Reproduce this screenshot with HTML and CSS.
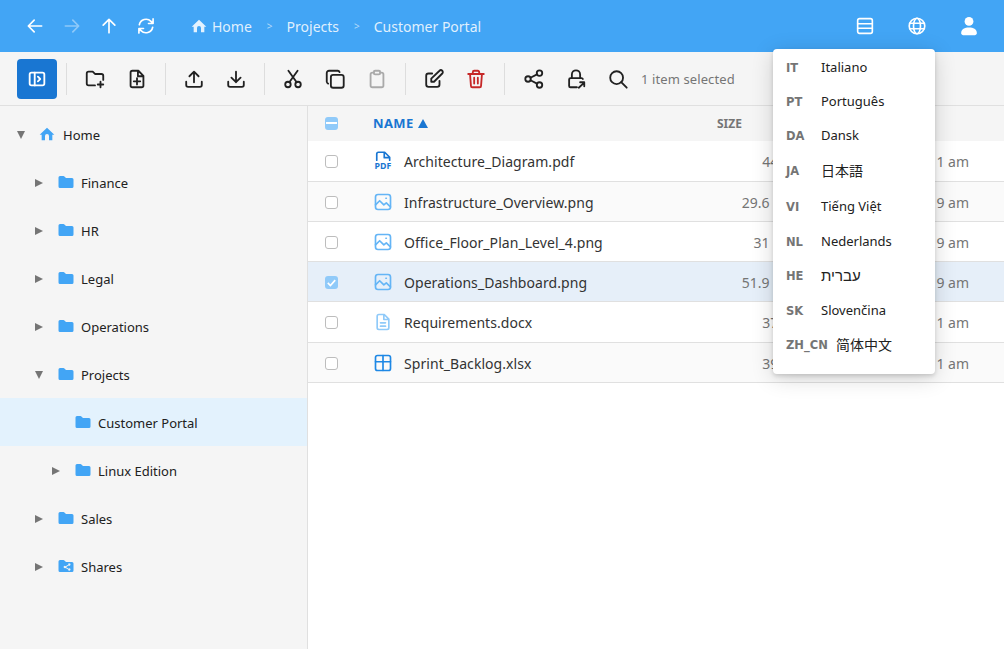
FILE: index.html
```html
<!DOCTYPE html>
<html lang="en">
<head>
    <meta charset="UTF-8">
    <meta name="viewport" content="width=device-width, initial-scale=1.0">
    <title>File Manager</title>
    <link rel="stylesheet" href="styles.css">
</head>
<body>

    <!-- Shared icons -->
    <svg class="sprite">
        <symbol id="folder" viewBox="0 0 24 24"><path d="M4 4h4.5a1.500 1.500 0 0 1 1 .4L12 6.500h8a2 2 0 0 1 2 2V18a2 2 0 0 1-2 2H4a2 2 0 0 1-2-2V6a2 2 0 0 1 2-2z"/></symbol>
        <symbol id="home" viewBox="0 0 24 24"><path d="M12 2.500 1 13h3v8.500h5V15a3 3 0 0 1 6 0v6.500h5V13h3z"/></symbol>
        <symbol id="image" viewBox="0 0 24 24"><rect x="3" y="3" width="18" height="18" rx="3"/><path d="m3 15.500 5-5 5 5 3-2.500 5 5M15.500 7.500h.5"/></symbol>
    </svg>

    <!-- Top bar -->
    <header class="topbar">
        <div class="nav-buttons">
            <svg class="icon" viewBox="0 0 24 24"><path d="M20 12H4.500M11 5l-7 7 7 7"/></svg>
            <svg class="icon faded" viewBox="0 0 24 24"><path d="M4 12h15.500M13 5l7 7-7 7"/></svg>
            <svg class="icon" viewBox="0 0 24 24"><path d="M12 20V4.500M5 11l7-7 7 7"/></svg>
            <svg class="icon" viewBox="0 0 24 24"><path d="M4 10.500a8.200 8.200 0 0 1 14-4l2 2.200M20.500 3.500v5.500H15M20 13.500a8.200 8.200 0 0 1-14 4l-2-2.200M3.500 20.500V15H9"/></svg>
        </div>
        <nav class="breadcrumbs">
            <svg class="crumb-home"><use href="#home"/></svg>
            <span class="crumb">Home</span>
            <span class="crumb-sep">&gt;</span>
            <span class="crumb">Projects</span>
            <span class="crumb-sep">&gt;</span>
            <span class="crumb">Customer Portal</span>
        </nav>
        <div class="top-actions">
            <svg class="icon" viewBox="0 0 24 24"><rect x="4" y="4" width="16" height="16" rx="2"/><path d="M4 9.500h16M4 14.500h16"/></svg>
            <svg class="icon" viewBox="0 0 24 24"><circle cx="12" cy="12" r="8.500"/><ellipse cx="12" cy="12" rx="3.800" ry="8.500"/><path d="M4 9h16M4 15h16"/></svg>
            <svg class="icon solid" viewBox="0 0 24 24"><circle cx="12" cy="7" r="4.800"/><path d="M3.500 20v-1c0-3.500 3.800-5.500 8.500-5.500s8.500 2 8.500 5.500v1a2 2 0 0 1-2 2h-13a2 2 0 0 1-2-2z"/></svg>
        </div>
    </header>

    <!-- Toolbar -->
    <div class="toolbar">
        <button class="tool tool-active">
            <svg viewBox="0 0 24 24"><rect x="4" y="5" width="16" height="14" rx="2"/><path d="M9.500 5v14M13 9.500l2.500 2.500-2.500 2.500"/></svg>
        </button>
        <span class="tool-sep"></span>
        <button class="tool"><svg viewBox="0 0 24 24"><path d="M12 19H5a2 2 0 0 1-2-2V6a2 2 0 0 1 2-2h4.500L12 6.500h7a2 2 0 0 1 2 2V13M18 15v6M15 18h6"/></svg></button>
        <button class="tool"><svg viewBox="0 0 24 24"><path d="M13.500 3H7a2 2 0 0 0-2 2v14a2 2 0 0 0 2 2h10a2 2 0 0 0 2-2V8.500zM13 3.500V9h5.500M12 11v7M8.500 14.500h7"/></svg></button>
        <span class="tool-sep"></span>
        <button class="tool"><svg viewBox="0 0 24 24"><path d="M3.500 15v3.500a2 2 0 0 0 2 2h13a2 2 0 0 0 2-2V15M12 15.500V4M7 9l5-5 5 5"/></svg></button>
        <button class="tool"><svg viewBox="0 0 24 24"><path d="M3.500 15v3.500a2 2 0 0 0 2 2h13a2 2 0 0 0 2-2V15M12 4v11.500M7 10.500l5 5 5-5"/></svg></button>
        <span class="tool-sep"></span>
        <button class="tool"><svg viewBox="0 0 24 24"><circle cx="6.500" cy="18" r="3"/><circle cx="17.500" cy="18" r="3"/><path d="M8 15.500 17 3M16 15.500 7 3"/></svg></button>
        <button class="tool"><svg viewBox="0 0 24 24"><rect x="7.500" y="7.500" width="14" height="14" rx="2.500"/><path d="M4.500 17A2.500 2.500 0 0 1 3 15V5.500A2.500 2.500 0 0 1 5.500 3H15a2.500 2.500 0 0 1 2 1.500"/></svg></button>
        <button class="tool tool-disabled"><svg viewBox="0 0 24 24"><path d="M8.500 5H7a2 2 0 0 0-2 2v12a2 2 0 0 0 2 2h10a2 2 0 0 0 2-2V7a2 2 0 0 0-2-2h-1.500"/><rect x="8.500" y="3" width="7" height="4" rx="1.500"/></svg></button>
        <span class="tool-sep"></span>
        <button class="tool"><svg viewBox="0 0 24 24"><path d="M10 6H6a2.500 2.500 0 0 0-2.500 2.500V18A2.500 2.500 0 0 0 6 20.500h9.500A2.500 2.500 0 0 0 18 18v-4M9 15v-3.500L18 3a1.500 1.500 0 0 1 3 3l-9 9z"/></svg></button>
        <button class="tool tool-danger"><svg viewBox="0 0 24 24"><path d="M3.500 6.500h17M8.500 6.500v-2A1.500 1.500 0 0 1 10 3h4a1.500 1.500 0 0 1 1.500 1.500v2M5.500 6.500l1 13A1.500 1.500 0 0 0 8 21h8a1.500 1.500 0 0 0 1.500-1.500l1-13M10 10.500V17M14 10.500V17"/></svg></button>
        <span class="tool-sep tool-sep-last"></span>
        <button class="tool"><svg viewBox="0 0 24 24"><circle cx="5.500" cy="12" r="3"/><circle cx="18" cy="5.500" r="3"/><circle cx="18" cy="18.500" r="3"/><path d="m8.200 10.600 7.100-3.700M8.200 13.400l7.100 3.700"/></svg></button>
        <button class="tool"><svg viewBox="0 0 24 24"><path d="M7.500 11V7a4.500 4.500 0 0 1 9 0v4M13 21H6a1.500 1.500 0 0 1-1.500-1.500v-7A1.500 1.500 0 0 1 6 11h12a1.500 1.500 0 0 1 1.500 1M15 21.500l6-5.500M16.500 15.500H21V20"/></svg></button>
        <button class="tool"><svg viewBox="0 0 24 24"><circle cx="10.500" cy="10.500" r="7"/><path d="m15.500 15.500 6 6"/></svg></button>
        <span class="selection-info">1 item selected</span>
    </div>

    <div class="main">
        <!-- Folder tree -->
        <aside class="sidebar">
            <div class="tree-row level-0">
                <span class="arrow arrow-open"></span>
                <svg class="tree-icon"><use href="#home"/></svg>
                <span>Home</span>
            </div>
            <div class="tree-row level-1">
                <span class="arrow"></span>
                <svg class="tree-icon"><use href="#folder"/></svg>
                <span>Finance</span>
            </div>
            <div class="tree-row level-1">
                <span class="arrow"></span>
                <svg class="tree-icon"><use href="#folder"/></svg>
                <span>HR</span>
            </div>
            <div class="tree-row level-1">
                <span class="arrow"></span>
                <svg class="tree-icon"><use href="#folder"/></svg>
                <span>Legal</span>
            </div>
            <div class="tree-row level-1">
                <span class="arrow"></span>
                <svg class="tree-icon"><use href="#folder"/></svg>
                <span>Operations</span>
            </div>
            <div class="tree-row level-1">
                <span class="arrow arrow-open"></span>
                <svg class="tree-icon"><use href="#folder"/></svg>
                <span>Projects</span>
            </div>
            <div class="tree-row level-2 tree-row-active">
                <span class="arrow arrow-none"></span>
                <svg class="tree-icon"><use href="#folder"/></svg>
                <span>Customer Portal</span>
            </div>
            <div class="tree-row level-2">
                <span class="arrow"></span>
                <svg class="tree-icon"><use href="#folder"/></svg>
                <span>Linux Edition</span>
            </div>
            <div class="tree-row level-1">
                <span class="arrow"></span>
                <svg class="tree-icon"><use href="#folder"/></svg>
                <span>Sales</span>
            </div>
            <div class="tree-row level-1">
                <span class="arrow"></span>
                <svg class="tree-icon" viewBox="0 0 24 24"><path fill-rule="evenodd" d="M4 4h4.500a1.500 1.500 0 0 1 1 .4L12 6.500h8a2 2 0 0 1 2 2V18a2 2 0 0 1-2 2H4a2 2 0 0 1-2-2V6a2 2 0 0 1 2-2zM16.500 8.500a1.500 1.500 0 0 0-1.500 1.700l-3.500 2a1.600 1.600 0 1 0 0 2.300l3.500 2a1.500 1.500 0 1 0 .6-1l-3.400-2a1.600 1.600 0 0 0 0-.3l3.400-2a1.500 1.500 0 1 0 .9-2.700z"/></svg>
                <span>Shares</span>
            </div>
        </aside>

        <!-- File list -->
        <section class="files">
            <div class="file-row file-head">
                <span class="cell-check"><span class="checkbox checkbox-mixed"></span></span>
                <span class="cell-name head-name">NAME <span class="sort-up"></span></span>
                <span class="cell-size head-size">SIZE</span>
                <span class="cell-date head-date">MODIFIED</span>
            </div>
            <div class="file-row file-row-tall">
                <span class="cell-check"><span class="checkbox"></span></span>
                <span class="cell-name">
                    <svg class="file-icon file-pdf" viewBox="0 0 24 24"><path d="M4.500 11V3.500A2 2 0 0 1 6.500 1.500H14l6 6V11M13.500 2v6H20"/><text x="12" y="22" text-anchor="middle">PDF</text></svg>
                    <span>Architecture_Diagram.pdf</span>
                </span>
                <span class="cell-size">44 B</span>
                <span class="cell-date">Mar 12, 2024, 1 am</span>
            </div>
            <div class="file-row file-row-alt">
                <span class="cell-check"><span class="checkbox"></span></span>
                <span class="cell-name">
                    <svg class="file-icon file-image"><use href="#image"/></svg>
                    <span>Infrastructure_Overview.png</span>
                </span>
                <span class="cell-size">29.6 KB</span>
                <span class="cell-date">Mar 12, 2024, 9 am</span>
            </div>
            <div class="file-row">
                <span class="cell-check"><span class="checkbox"></span></span>
                <span class="cell-name">
                    <svg class="file-icon file-image"><use href="#image"/></svg>
                    <span>Office_Floor_Plan_Level_4.png</span>
                </span>
                <span class="cell-size">31 KB</span>
                <span class="cell-date">Mar 12, 2024, 9 am</span>
            </div>
            <div class="file-row file-row-selected">
                <span class="cell-check"><span class="checkbox checkbox-on"><svg viewBox="0 0 14 14"><path d="m3 7.500 2.800 2.800L11 4.500"/></svg></span></span>
                <span class="cell-name">
                    <svg class="file-icon file-image"><use href="#image"/></svg>
                    <span>Operations_Dashboard.png</span>
                </span>
                <span class="cell-size">51.9 KB</span>
                <span class="cell-date">Mar 12, 2024, 9 am</span>
            </div>
            <div class="file-row file-row-tall">
                <span class="cell-check"><span class="checkbox"></span></span>
                <span class="cell-name">
                    <svg class="file-icon file-doc" viewBox="0 0 24 24"><path d="M13.500 3H7a2 2 0 0 0-2 2v14a2 2 0 0 0 2 2h10a2 2 0 0 0 2-2V8.500zM13 3.500V9h5.500M9 13h6M9 17h6"/></svg>
                    <span>Requirements.docx</span>
                </span>
                <span class="cell-size">37 B</span>
                <span class="cell-date">Mar 12, 2024, 1 am</span>
            </div>
            <div class="file-row file-row-alt">
                <span class="cell-check"><span class="checkbox"></span></span>
                <span class="cell-name">
                    <svg class="file-icon file-sheet" viewBox="0 0 24 24"><rect x="3" y="3" width="18" height="18" rx="2.500"/><path d="M3 10.500h18M12 3v18"/></svg>
                    <span>Sprint_Backlog.xlsx</span>
                </span>
                <span class="cell-size">39 B</span>
                <span class="cell-date">Mar 12, 2024, 1 am</span>
            </div>
        </section>
    </div>

    <!-- Language menu, open over the page -->
    <ul class="lang-menu">
        <li class="lang-item"><span class="lang-code">IT</span><span>Italiano</span></li>
        <li class="lang-item"><span class="lang-code">PT</span><span>Português</span></li>
        <li class="lang-item"><span class="lang-code">DA</span><span>Dansk</span></li>
        <li class="lang-item lang-cjk"><span class="lang-code">JA</span><span>日本語</span></li>
        <li class="lang-item"><span class="lang-code">VI</span><span>Tiếng Việt</span></li>
        <li class="lang-item"><span class="lang-code">NL</span><span>Nederlands</span></li>
        <li class="lang-item lang-hebrew"><span class="lang-code">HE</span><span>עברית</span></li>
        <li class="lang-item"><span class="lang-code">SK</span><span>Slovenčina</span></li>
        <li class="lang-item lang-cjk"><span class="lang-code">ZH_CN</span><span>简体中文</span></li>
    </ul>

</body>
</html>
```

FILE: styles.css
```css
/* Basic reset */
* {
    margin: 0;
    padding: 0;
    box-sizing: border-box;
}

html {
    background-color: white;
}

body {
    font-family: 'Noto Sans', 'Noto Sans CJK JP', sans-serif;
    font-size: 14px;
    color: #212121;
    height: 649px;
    display: flex;
    flex-direction: column;
    overflow: hidden;
    position: relative;
}

.sprite {
    display: none;
}

/* Top bar */
.topbar {
    height: 52px;
    flex: none;
    background-color: #42a5f5;
    color: white;
    display: flex;
    align-items: center;
    padding: 0 24px 0 25px;
}

.icon {
    width: 20px;
    height: 20px;
    fill: none;
    stroke: white;
    stroke-width: 2;
    stroke-linecap: round;
    stroke-linejoin: round;
}

.icon.faded {
    opacity: 0.4;
}

.icon.solid {
    fill: white;
    stroke: none;
}

.nav-buttons {
    display: flex;
    gap: 17px;
}

.breadcrumbs {
    display: flex;
    align-items: center;
    margin-left: 35px;
    color: rgba(255, 255, 255, 0.85);
}

.crumb-home {
    width: 16px;
    height: 16px;
    fill: rgba(255, 255, 255, 0.85);
    margin-right: 5px;
}

.crumb-sep {
    font-size: 10px;
    opacity: 0.7;
    margin: 0 14px 0 15px;
}

.top-actions {
    margin-left: auto;
    display: flex;
    gap: 30px;
}

.top-actions .icon {
    width: 22px;
    height: 22px;
    stroke-width: 1.8;
}

/* Toolbar */
.toolbar {
    height: 54px;
    flex: none;
    background-color: #f5f5f5;
    border-bottom: 1px solid #e0e0e0;
    display: flex;
    align-items: center;
    padding: 0 17px;
}

.tool {
    width: 40px;
    height: 40px;
    margin-right: 2px;
    border: none;
    border-radius: 4px;
    background: none;
    display: flex;
    align-items: center;
    justify-content: center;
}

.tool svg {
    width: 22px;
    height: 22px;
    fill: none;
    stroke: #212121;
    stroke-width: 2;
    stroke-linecap: round;
    stroke-linejoin: round;
}

.tool-active {
    background-color: #1976d2;
    margin-right: 3px;
}

.tool-active svg {
    stroke: white;
}

.tool-disabled svg {
    stroke: #aaa;
}

.tool-danger svg {
    stroke: #c62828;
}

.tool-sep {
    width: 1px;
    height: 32px;
    background-color: #ddd;
    margin: 0 8px 0 6px;
}

.tool-sep-last {
    margin-right: 9px;
}

.selection-info {
    margin-left: 1px;
    font-size: 13px;
    letter-spacing: 0.1px;
    color: #757575;
}

/* Main area */
.main {
    flex: 1;
    display: flex;
    min-height: 0;
}

/* Folder tree */
.sidebar {
    width: 308px;
    flex: none;
    background-color: #f5f5f5;
    border-right: 1px solid #e0e0e0;
    padding-top: 4px;
}

.tree-row {
    height: 48px;
    display: flex;
    align-items: center;
    padding-top: 2px;
    font-size: 13px;
    color: #212121;
}

.tree-row-active {
    background-color: #e3f2fd;
}

.level-0 {
    padding-left: 17px;
}

.level-1 {
    padding-left: 35px;
}

.level-2 {
    padding-left: 52px;
}

.arrow {
    width: 0;
    height: 0;
    margin-right: 14px;
    border-left: 8px solid #757575;
    border-top: 4px solid transparent;
    border-bottom: 4px solid transparent;
}

.arrow-open {
    border-left: 4.500px solid transparent;
    border-right: 4.500px solid transparent;
    border-top: 8px solid #757575;
    border-bottom: none;
}

.arrow-none {
    visibility: hidden;
}

.tree-icon {
    width: 18px;
    height: 18px;
    fill: #42a5f5;
    margin-right: 6px;
    margin-bottom: 3px;
    flex: none;
}

.level-0 .tree-icon {
    width: 16px;
    height: 16px;
    margin-right: 8px;
}

/* File list */
.files {
    flex: 1;
    min-width: 0;
}

.file-row {
    height: 40px;
    padding-top: 1px;
    display: flex;
    align-items: center;
    border-bottom: 1px solid #e0e0e0;
    color: #333;
}

.file-row-tall {
    height: 41px;
    padding-top: 0;
}

.file-row-alt {
    background-color: #fafafa;
}

.file-row-selected {
    background-color: #e6eff9;
}

.file-head {
    height: 35px;
    padding: 0 0 1px;
    background-color: #f5f5f5;
    border-bottom: none;
    font-weight: bold;
    font-size: 12px;
    color: #757575;
}

.cell-check {
    width: 47px;
    flex: none;
    display: flex;
    justify-content: center;
}

.cell-name {
    width: 345px;
    flex: none;
    padding-left: 18px;
    display: flex;
    align-items: center;
    gap: 11px;
    letter-spacing: 0.06px;
}

.cell-size {
    width: 96px;
    flex: none;
    color: #757575;
    text-align: right;
    padding-right: 5px;
}

.cell-date {
    flex: 1;
    color: #757575;
    text-align: right;
    padding-right: 35px;
    white-space: nowrap;
}

.head-name {
    color: #1976d2;
    font-size: 13px;
    gap: 4px;
    letter-spacing: 0.4px;
}

.head-size {
    font-size: 12px;
    text-align: left;
    padding: 0 0 0 17px;
}

.head-date {
    font-size: 12px;
    text-align: left;
    padding: 0 0 0 20px;
}

.sort-up {
    width: 0;
    height: 0;
    border-left: 5.500px solid transparent;
    border-right: 5.500px solid transparent;
    border-bottom: 9px solid #1976d2;
}

.checkbox {
    width: 13px;
    height: 13px;
    border: 1px solid #bdbdbd;
    border-radius: 3px;
    background-color: white;
    display: flex;
    align-items: center;
    justify-content: center;
}

.checkbox-mixed,
.checkbox-on {
    border: none;
    background-color: #90caf9;
}

.checkbox-mixed::after {
    content: "";
    width: 11px;
    height: 2px;
    background-color: white;
}

.checkbox-on svg {
    width: 13px;
    height: 13px;
    fill: none;
    stroke: white;
    stroke-width: 1.8;
}

.file-icon {
    width: 20px;
    height: 20px;
    flex: none;
    fill: none;
    stroke: #64b5f6;
    stroke-width: 2;
    stroke-linecap: round;
    stroke-linejoin: round;
}

.file-pdf {
    stroke: #1976d2;
    overflow: visible;
}

.file-pdf text {
    font-size: 10.5px;
    font-weight: bold;
    fill: #1976d2;
    stroke: none;
}

.file-doc {
    stroke: #90caf9;
}

.file-sheet {
    stroke: #1e88e5;
}

/* Language menu */
.lang-menu {
    list-style: none;
    position: absolute;
    top: 49px;
    left: 773px;
    width: 162px;
    height: 325px;
    background-color: white;
    border-radius: 4px;
    box-shadow: 0 2px 4px rgba(0, 0, 0, 0.15), 0 4px 22px rgba(0, 0, 0, 0.16);
    padding-left: 13px;
    z-index: 5;
}

.lang-item {
    height: 34.4px;
    padding-top: 2px;
    display: flex;
    align-items: center;
    font-size: 13px;
    color: #212121;
}

.lang-item:nth-child(-n+3) {
    height: 34px;
}

.lang-item:nth-child(4) {
    margin-top: 1.2px;
}

.lang-cjk {
    height: 36px;
    padding-top: 0;
    font-size: 14px;
}

.lang-hebrew {
    font-size: 15px;
}

.lang-code {
    width: 35px;
    padding-top: 2px;
    font-family: 'DejaVu Sans', sans-serif;
    font-size: 11.5px;
    font-weight: bold;
    color: #757575;
}

.lang-cjk:last-child .lang-code {
    width: 50px;
}
```
